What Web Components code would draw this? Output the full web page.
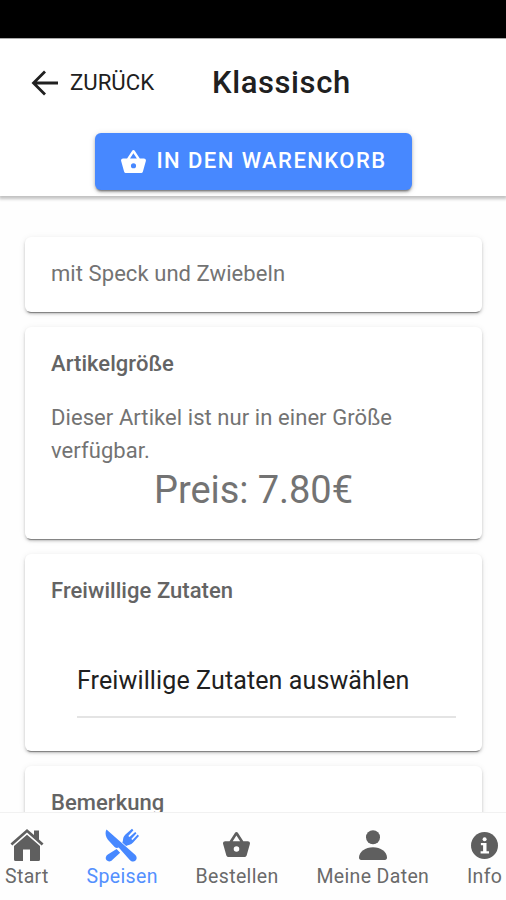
<!DOCTYPE html>
<html lang="de">
<head>
<meta charset="utf-8">
<meta name="viewport" content="width=device-width, initial-scale=1">
<title>Klassisch</title>
<style>
    html, body {
        margin: 0;
        height: 100%;
        overflow: hidden;
        background: #fefefe;
        font-family: Roboto, sans-serif;
    }
</style>
</head>
<body>
<order-app></order-app>

<script>
// name: [viewBox, markup]
const ICONS = {
    back: ["0 0 28 26", `<path d="M14 1.5 2.5 13 14 24.5M2.5 13H27" fill="none" stroke="currentColor" stroke-width="2.8"/>`],
    basket: ["0 0 28 27", `<path fill="currentColor" fill-rule="evenodd" d="M13.9 0c-.6 0-1.1.3-1.4.8L6.8 9.600H2.200C1 9.600 0 10.500 0 11.700c0 .3 0 .5.1.7l3.300 11.700c.3 1.100 1.300 1.900 2.400 1.900h16.400c1.100 0 2.100-.8 2.400-1.900l3.300-11.700.1-.7c0-1.200-1-2.100-2.200-2.100h-4.700L15.400.8C15.100.3 14.500 0 13.900 0zm0 3.700 3.900 5.900H10.100zM14 14.800a2.900 2.900 0 1 1 0 5.800 2.900 2.900 0 0 1 0-5.800z"/>`],
    home: ["0 0 34 34", `<path fill="currentColor" d="M17 1 .5 15.400l1.800 2L17 4.600l14.700 12.800 1.800-2-4.500-4V2.500h-5v4.600z"/><path fill="currentColor" d="M17 6.800 4 18v13.500q0 1.500 1.500 1.500H13V21.500h7V33h8.500q1.500 0 1.500-1.500V18z"/>`],
    dining: ["0 0 34 34", `<g fill="currentColor"><path d="M1.500 1.500c-2.200 4-.1 8.600 2.300 11.300l5.800 6.300c1.200 1.100 2.800 1.200 4.100.5l11.300 12.600c1.500 1.700 4.100 1.800 5.600.4 1.500-1.500 1.400-3.900-.2-5.500z"/><path d="m11.600 21-8.800 5.500c-2.300 1.600-2.700 4.200-1.200 5.800 1.700 1.700 4.400 1.400 5.900-.6l7.600-7z"/><path d="M17.300 14.600c1-1.700.5-3.500 1.200-5.400.4-1 1-1.800 1.700-2.500L27 .8l1.400 1.400-5.100 5.700 1.200 1.200 5.700-5.200 1.300 1.300-5.200 5.700 1.200 1.200 5.200-5.600 1.300 1.500-5.900 6.500c-2.300 2.600-4.700 1.900-7 3.600z"/></g>`],
    person: ["0 0 28 30", `<g fill="currentColor"><circle cx="14" cy="7.200" r="7"/><path d="M14 17.200C6.400 17.200 0 22 0 27.500 0 29 .8 30 2.200 30h23.600c1.400 0 2.200-1 2.200-2.500 0-5.500-6.400-10.300-14-10.300z"/></g>`],
    info: ["0 0 27 27", `<circle cx="13.500" cy="13.500" r="13.500" fill="currentColor"/><g fill="#fff"><circle cx="13.600" cy="7.200" r="2"/><path d="M9.900 11h5.600v8.200H18v2.200H9.600v-2.200h2.500v-6H9.900z"/></g>`],
};

function render(host, html) {
    const template = document.createElement("template");
    template.innerHTML = html;
    host.attachShadow({ mode: "open" }).appendChild(template.content.cloneNode(true));
}

class AppIcon extends HTMLElement {
    connectedCallback() {
        if (this.shadowRoot) return;
        const [box, markup] = ICONS[this.getAttribute("name")];
        render(this, `
        <style>
            :host { display: block; flex: none; }
            svg { display: block; width: 100%; height: 100%; }
        </style>
        <svg viewBox="${box}" aria-hidden="true">${markup}</svg>`);
    }
}

class AppHeader extends HTMLElement {
    constructor() {
        super();
        render(this, `
        <style>
            :host {
                display: block;
                box-sizing: border-box;
                height: 158px;
                background: #fff;
                color: #202020;
                border-top: 1px solid #aaa;
                box-shadow: 0 2px 3px 1px rgba(0, 0, 0, .24);
            }
            .bar { display: flex; align-items: center; height: 87px; padding-left: 31px; }
            .back { display: flex; align-items: center; gap: 11px; width: 181px; font-size: 22.200px; }
            .back app-icon { width: 28px; height: 26px; }
            .back span { position: relative; top: -1px; }
            h1 { margin: 0; font-size: 31px; font-weight: 500; letter-spacing: .6px; }
            .action { display: flex; justify-content: center; padding-top: 7px; }
        </style>
        <div class="bar">
            <div class="back"><app-icon name="back"></app-icon><span>ZURÜCK</span></div>
            <h1><slot name="title"></slot></h1>
        </div>
        <div class="action"><slot></slot></div>`);
    }
}

class CartButton extends HTMLElement {
    constructor() {
        super();
        render(this, `
        <style>
            :host { display: block; }
            button {
                display: flex;
                align-items: center;
                justify-content: center;
                gap: 10px;
                width: 317px;
                height: 57px;
                padding: 0 0 0 2px;
                border: 0;
                border-radius: 6px;
                background: #4788ff;
                color: #fff;
                font: 500 22px/57px Roboto, sans-serif;
                letter-spacing: 1.450px;
                box-shadow: 0 3px 2px -2px rgba(0,0,0,.35), 0 2px 3px rgba(0,0,0,.25), 0 1px 6px rgba(0,0,0,.14);
            }
            app-icon { width: 25px; height: 24px; }
            span { position: relative; top: -1px; }
        </style>
        <button><app-icon name="basket"></app-icon><span><slot></slot></span></button>`);
    }
}

class AppCard extends HTMLElement {
    constructor() {
        super();
        render(this, `
        <style>
            :host {
                display: block;
                box-sizing: border-box;
                border-radius: 6px;
                padding: 20px 26px;
                background: #fff;
                color: #737373;
                font-size: 22px;
                line-height: 33px;
                letter-spacing: .07px;
                box-shadow: 0 3px 1px -2px rgba(0,0,0,.38), 0 2px 3px rgba(0,0,0,.2), 0 1px 7px rgba(0,0,0,.07);
            }
            h2 { margin: 0; color: #646464; font-size: 22px; line-height: 33px; font-weight: 500; letter-spacing: .05px; }
        </style>
        ${this.hasAttribute("heading") ? `<h2>${this.getAttribute("heading")}</h2>` : ""}
        <slot></slot>`);
    }
}

class AppSelect extends HTMLElement {
    constructor() {
        super();
        render(this, `
        <style>
            :host {
                display: block;
                margin: 36px 0 0 26px;
                padding: 21px 0 18px;
                border-bottom: 2px solid #e4e4e4;
                color: #202020;
                font-size: 25px;
                line-height: 34px;
                letter-spacing: .12px;
            }
        </style>
        <slot></slot>`);
    }
}

class AppTab extends HTMLElement {
    constructor() {
        super();
        render(this, `
        <style>
            :host {
                display: flex;
                flex-direction: column;
                align-items: center;
                color: #5f5f5f;
                font-size: 19.500px;
                line-height: 24px;
                letter-spacing: .35px;
                white-space: nowrap;
            }
            :host([active]) { color: #4788ff; }
            .icon { display: flex; align-items: center; height: 34px; margin-bottom: 3px; }
            .label { margin-right: -.35px; opacity: .93; }
            .home, .dining { width: 34px; height: 34px; }
            .basket { width: 27px; height: 26px; }
            .person { width: 28px; height: 30px; }
            .info { width: 27px; height: 27px; }
        </style>
        <div class="icon"><app-icon class="${this.getAttribute("icon")}" name="${this.getAttribute("icon")}"></app-icon></div>
        <div class="label"><slot></slot></div>`);
    }
}

class AppTabs extends HTMLElement {
    constructor() {
        super();
        render(this, `
        <style>
            :host {
                display: flex;
                justify-content: space-between;
                box-sizing: border-box;
                height: 88px;
                padding: 15px 4px 0 5px;
                background: #fefefe;
                border-top: 1px solid #f1f1f1;
            }
        </style>
        <slot></slot>`);
    }
}

class OrderApp extends HTMLElement {
    constructor() {
        super();
        render(this, `
        <style>
            :host { display: flex; flex-direction: column; height: 900px; }
            .status { flex: none; height: 38px; background: #000; }
            app-header, app-tabs { flex: none; }
            app-header { z-index: 1; }
            main {
                display: flex;
                flex-direction: column;
                gap: 15px;
                flex: 1;
                min-height: 0;
                overflow: hidden;
                padding: 41px 24px 0 25px;
            }
            app-card { flex: none; }
            .desc { height: 75px; }
            .size { height: 212px; }
            .extras { height: 197px; }
            .note { height: 180px; }
            p { margin: 21px 0 0; }
            .price { font-size: 38px; line-height: 46px; text-align: center; letter-spacing: -.05px; }
        </style>
        <div class="status"></div>
        <app-header>
            <span slot="title">Klassisch</span>
            <cart-button>IN DEN WARENKORB</cart-button>
        </app-header>
        <main>
            <app-card class="desc">mit Speck und Zwiebeln</app-card>
            <app-card class="size" heading="Artikelgröße">
                <p>Dieser Artikel ist nur in einer Größe verfügbar.</p>
                <div class="price">Preis: 7.80€</div>
            </app-card>
            <app-card class="extras" heading="Freiwillige Zutaten">
                <app-select>Freiwillige Zutaten auswählen</app-select>
            </app-card>
            <app-card class="note" heading="Bemerkung"></app-card>
        </main>
        <app-tabs>
            <app-tab icon="home">Start</app-tab>
            <app-tab icon="dining" active>Speisen</app-tab>
            <app-tab icon="basket">Bestellen</app-tab>
            <app-tab icon="person">Meine Daten</app-tab>
            <app-tab icon="info">Info</app-tab>
        </app-tabs>`);
    }
}

customElements.define("app-icon", AppIcon);
customElements.define("app-header", AppHeader);
customElements.define("cart-button", CartButton);
customElements.define("app-card", AppCard);
customElements.define("app-select", AppSelect);
customElements.define("app-tab", AppTab);
customElements.define("app-tabs", AppTabs);
customElements.define("order-app", OrderApp);
</script>
</body>
</html>
